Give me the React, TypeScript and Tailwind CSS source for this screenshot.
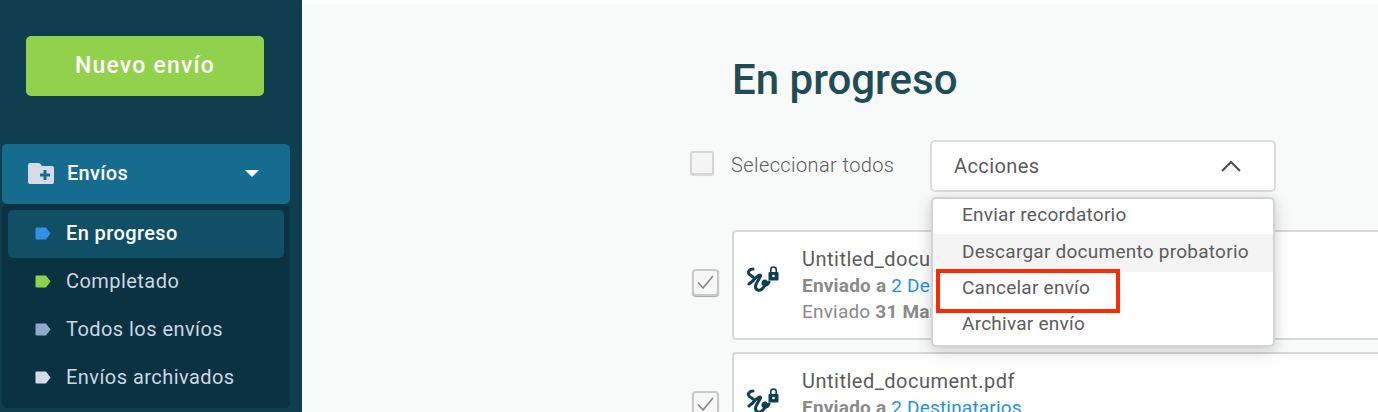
function Tag({ color }: { color: string }) {
  return (
    <svg width="16" height="13" viewBox="0 0 16 13" className="shrink-0">
      <path d="M1.5 0.5H11L15.5 6.5L11 12.5H1.5Q0.5 12.5 0.5 11.5V1.5Q0.5 0.5 1.5 0.5Z" fill={color} />
    </svg>
  );
}

function FolderPlus() {
  return (
    <svg width="26" height="21" viewBox="0 0 26 21" className="shrink-0">
      <path d="M2 0H10.5Q11.5 0 12.3 0.8L14 3H24Q26 3 26 5V19Q26 21 24 21H2Q0 21 0 19V2Q0 0 2 0Z" fill="#d5dce8" />
      <path d="M15.5 7H18.5V10.5H22V13.5H18.5V17H15.5V13.5H12V10.5H15.5Z" fill="#166c8f" />
    </svg>
  );
}

function ChevronUpWide() {
  return (
    <svg width="20" height="12" viewBox="0 0 20 12" fill="none" className="shrink-0">
      <path d="M1 11L10 2L19 11" stroke="#4c4c4c" strokeWidth="2" />
    </svg>
  );
}

function SignIcon() {
  return (
    <svg width="34" height="28" viewBox="0 0 34 28" fill="none" className="shrink-0 mb-[12px]">
      <path
        d="M7 4C3.5 4 1 7 3.5 9.5C5.5 11.5 9 12 8 14.5C7 16.5 3.5 18 3 19C7 16.5 11 10 14 10C16.5 10.5 9.5 17.5 9.5 21.5C9.5 25.5 13.5 26 16 24C19.5 21 21.5 17 19.5 16C17.5 15.5 15.5 19 18.5 20C20.5 20.5 22 19 23 17"
        stroke="#0f3f4f"
        strokeWidth="3"
        strokeLinecap="round"
        strokeLinejoin="round"
      />
      <rect x="22.5" y="7" width="10" height="8.5" rx="1" fill="#0f3f4f" />
      <path d="M24.8 7.5V4.5C24.8 1.2 30.2 1.2 30.2 4.5V7.5" stroke="#0f3f4f" strokeWidth="1.6" />
      <circle cx="27.5" cy="11" r="1.3" fill="#ffffff" />
    </svg>
  );
}

function CheckBox() {
  return (
    <div className="w-[27px] h-[27px] mb-[6px] shrink-0 rounded-[4px] border-2 border-[#c9c9c9] bg-[#f7f7f7] shadow-[0_1px_1px_rgba(0,0,0,0.35)] flex items-center justify-center">
      <svg width="19" height="16" viewBox="0 0 19 16" fill="none">
        <path d="M2 8.5L7 14L17 2" stroke="#8a8a8a" strokeWidth="1.8" />
      </svg>
    </div>
  );
}

function DocCard() {
  return (
    <div className="flex items-center gap-[13px]">
      <CheckBox />
      <div className="w-[700px] h-[110px] shrink-0 bg-white border-2 border-[#d8d8d8] rounded-[4px] flex items-center pl-[12px] gap-[22px]">
        <SignIcon />
        <div className="text-[19px] leading-[26px] tracking-[0.2px] text-[#8a8a8a] whitespace-nowrap">
          <div className="text-[20px] leading-[28px] tracking-[0.5px] text-[#5c5c5c]">Untitled_document.pdf</div>
          <div>
            <b className="font-bold">Enviado a</b> <span className="text-[#1e93dc]">2 Destinatarios</span>
          </div>
          <div>
            Enviado <b className="font-bold">31 Mar</b>
          </div>
        </div>
      </div>
    </div>
  );
}

const menuItems = [
  { label: "En progreso", color: "#3490e4", active: true },
  { label: "Completado", color: "#8fd14a", active: false },
  { label: "Todos los envíos", color: "#8fa9c9", active: false },
  { label: "Envíos archivados", color: "#d5dce8", active: false },
];

export default function App() {
  return (
    <div className="flex h-[412px] w-[1378px] overflow-hidden font-['Roboto',sans-serif]">
      <aside className="w-[302px] shrink-0 bg-[#0f3f4f] pt-[36px] pl-[2px] pr-[12px]">
        <button className="ml-[24px] w-[238px] h-[60px] rounded-[5px] bg-[#92d14b] text-white text-[23px] font-medium tracking-[1.2px]">
          Nuevo envío
        </button>
        <div className="mt-[48px] h-[60px] rounded-[5px] bg-[#166c8f] flex items-center pl-[26px] pr-[31px] pb-[2px]">
          <FolderPlus />
          <span className="ml-[13px] text-white text-[20px] font-medium tracking-[0.3px]">Envíos</span>
          <div className="ml-auto w-0 h-0 border-x-[7px] border-x-transparent border-t-[7px] border-t-white" />
        </div>
        <div className="h-[204px] rounded-[5px] bg-[#0a3240] p-[6px]">
          {menuItems.map((item) => (
            <div
              key={item.label}
              className={
                item.active
                  ? "h-[48px] rounded-[5px] bg-[#114f66] flex items-center pl-[27px] pb-[2px] gap-[15px] text-white text-[20px] font-medium tracking-[0.4px]"
                  : "h-[48px] flex items-center pl-[27px] pb-[2px] gap-[15px] text-[#cdd6e2] text-[20px] tracking-[0.45px]"
              }
            >
              <Tag color={item.color} />
              <span>{item.label}</span>
            </div>
          ))}
        </div>
      </aside>

      <main className="flex-1 bg-[#f8f9f9] border-t-[4px] border-white pl-[388px]">
        <h1 className="ml-[42px] mt-[52px] text-[42px] leading-[48px] font-medium text-[#204b57]">En progreso</h1>
        <div className="mt-[36px] flex items-center h-[52px]">
          <div className="w-[24px] h-[24px] mb-[7px] shrink-0 rounded-[3px] border-2 border-[#d5d5d5] bg-[#f4f4f4] shadow-[0_1px_1px_rgba(0,0,0,0.12)]" />
          <span className="ml-[17px] w-[164px] mb-[2px] text-[20px] tracking-[0.4px] font-light text-[#5c5c5c] whitespace-nowrap">
            Seleccionar todos
          </span>
          <div className="relative ml-[35px] w-[346px] h-[52px]">
            <div className="h-full bg-white border-2 border-[#dcdcdc] rounded-[5px] flex items-center justify-between pl-[22px] pr-[33px] text-[20px] tracking-[0.4px] text-[#5c5c5c]">
              Acciones
              <ChevronUpWide />
            </div>
            <div className="absolute z-10 left-[1px] top-[57px] w-[344px] h-[150px] bg-white border-2 border-[#d3d3d3] rounded-[5px] shadow-[0_4px_16px_rgba(0,0,0,0.2)] overflow-hidden text-[19px] tracking-[0.25px] text-[#5c5c5c]">
              <div className="h-[35px] flex items-center pl-[29px] pb-[2px]">Enviar recordatorio</div>
              <div className="h-[38px] flex items-center pl-[29px] pb-[2px] bg-[#f4f4f4]">Descargar documento probatorio</div>
              <div className="h-[35px] flex items-center pl-[29px] pb-[2px]">Cancelar envío</div>
              <div className="h-[36px] flex items-center pl-[29px] pb-[2px]">Archivar envío</div>
            </div>
            <div className="absolute z-20 left-[6px] top-[129px] w-[184px] h-[44px] border-[4px] border-[#ff2a00]" />
          </div>
        </div>
        <div className="mt-[38px] ml-[2px] flex flex-col gap-[12px]">
          <DocCard />
          <DocCard />
        </div>
      </main>
    </div>
  );
}
